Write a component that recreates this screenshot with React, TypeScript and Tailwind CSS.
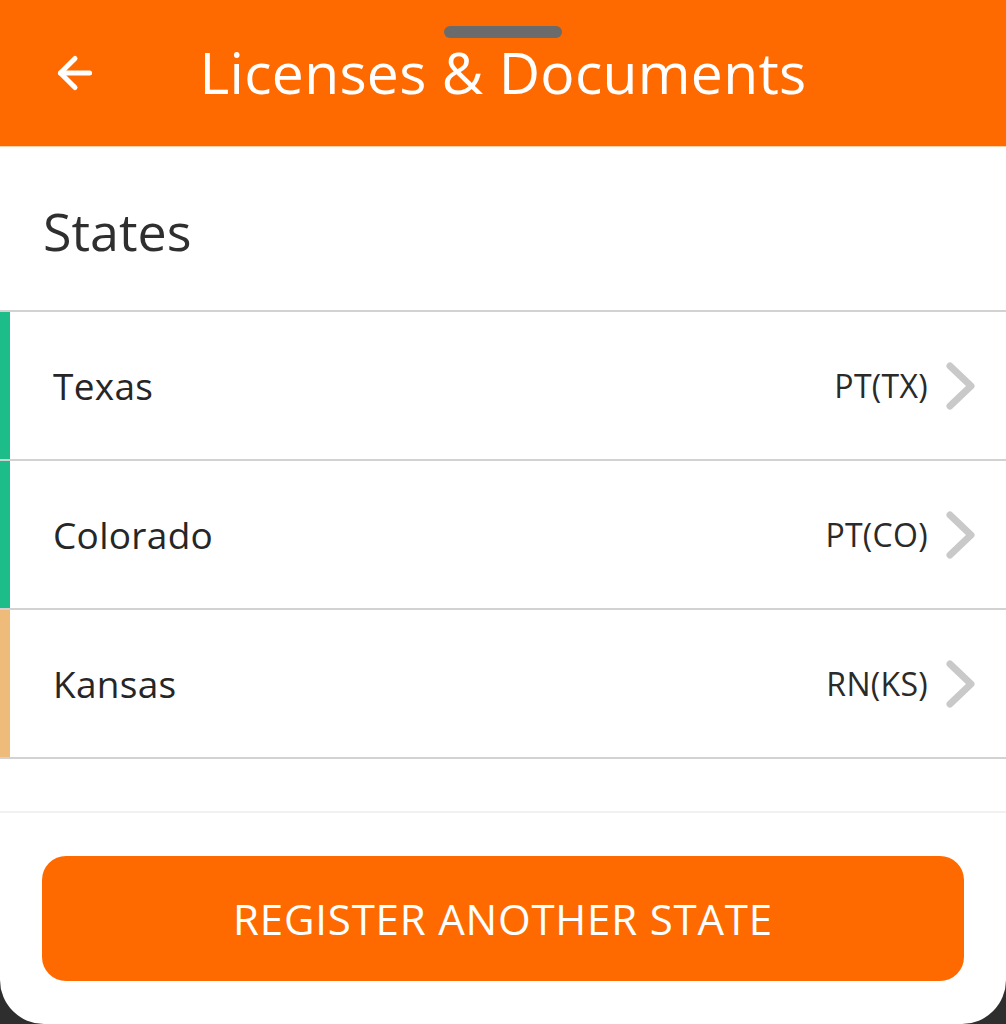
import React from 'react';
import { ArrowLeft } from 'lucide-react';

type StateRow = {
  name: string;
  license: string;
  bar: string;
};

const rows: StateRow[] = [
  { name: 'Texas', license: 'PT(TX)', bar: 'bg-[#1dbd8a]' },
  { name: 'Colorado', license: 'PT(CO)', bar: 'bg-[#1dbd8a]' },
  { name: 'Kansas', license: 'RN(KS)', bar: 'bg-[#efbb7a]' },
];

const Chevron: React.FC = () => (
  <svg width="32" height="50" viewBox="0 0 32 50" fill="none">
    <polyline
      points="6,5 27,25 6,45"
      stroke="#c9c9c9"
      strokeWidth="7"
      strokeLinecap="round"
      strokeLinejoin="round"
    />
  </svg>
);

const App: React.FC = () => {
  return (
    <div className="h-screen bg-[#2e2e2e] font-['Open_Sans',sans-serif]">
      <div className="h-full flex flex-col bg-white rounded-b-[44px] overflow-hidden">
        {/* Header */}
        <header className="h-[147px] shrink-0 bg-[#ff6a00] flex flex-col border-b border-[#ffcfa8]">
          <div className="flex justify-center pt-[26px]">
            <div className="w-[118px] h-[12px] rounded-full bg-[#6b6b6b]" />
          </div>
          <div className="grid grid-cols-[1fr_auto_1fr] items-center mt-[6px]">
            <div className="pl-[50px]">
              <ArrowLeft size={50} strokeWidth={2.4} color="#ffffff" />
            </div>
            <h1 className="text-white text-[57px] leading-none font-normal tracking-[0.3px]">
              Licenses &amp; Documents
            </h1>
            <div />
          </div>
        </header>

        {/* Section title */}
        <div className="h-[163px] shrink-0 pl-[43px] pt-[58px]">
          <h2 className="text-[#2f2f2f] text-[52px] leading-none">States</h2>
        </div>

        {/* State list */}
        <div className="border-t-2 border-[#d2d2d2]">
          {rows.map((row) => (
            <div key={row.name} className="flex h-[149px] border-b-2 border-[#d2d2d2]">
              <div className={`w-[10px] ${row.bar}`} />
              <div className="flex-1 flex items-center pl-[43px] pr-[30px]">
                <span className="flex-1 text-[#262626] text-[37px] tracking-[0.3px]">{row.name}</span>
                <span className="text-[#2a2a2a] text-[32px] tracking-[0.3px] mr-[16px]">{row.license}</span>
                <Chevron />
              </div>
            </div>
          ))}
        </div>

        <div className="h-[54px] shrink-0 border-b-2 border-[#f1f1f1]" />

        {/* Action */}
        <div className="px-[42px] pt-[43px]">
          <button className="w-full h-[125px] rounded-[24px] bg-[#ff6a00] text-white text-[42px] tracking-[0.8px] uppercase">
            Register another state
          </button>
        </div>
      </div>
    </div>
  );
};

export default App;
